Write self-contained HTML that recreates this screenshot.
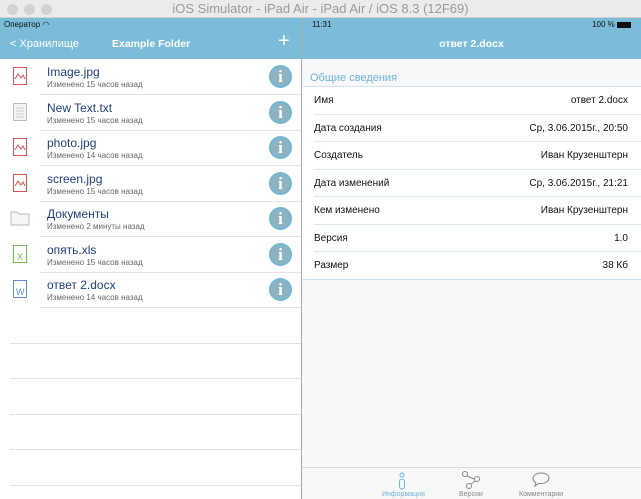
<!DOCTYPE html><html><head><meta charset="utf-8"><style>
*{margin:0;padding:0;box-sizing:border-box}
body{width:641px;height:499px;overflow:hidden;font-family:"Liberation Sans",sans-serif;background:#fff;position:relative}
.tb{position:absolute;left:0;top:0;width:641px;height:18px;background:#ebebeb;border-bottom:1px solid #d0d0d0;text-align:center;font-size:13px;color:#9a9a9a;line-height:18px}
.dot{position:absolute;top:4px;width:11px;height:11px;border-radius:50%;background:#d2d2d2}
.nav{position:absolute;top:18px;height:41px;background:#7bbdd8;color:#fff}
.l{position:absolute;left:0;top:59px;width:301px;height:440px;background:#fff}
.vd{position:absolute;left:301px;top:18px;width:1px;height:481px;background:#aaa}
.row{position:absolute;left:0;width:301px;height:36px}
.row .n{position:absolute;left:47px;top:6px;font-size:12px;color:#1f3f7a}
.row .s{position:absolute;left:47px;top:21px;font-size:8px;color:#666}
.row .ln{position:absolute;left:40px;right:0;bottom:0;height:1px;background:#e2e2e2}
.info{position:absolute;left:269px;top:6px;width:23px;height:23px;border-radius:50%;background:#8cb3c2;border:2px solid #74b6d3;color:#fff;font:bold 17px "Liberation Serif",serif;text-align:center;line-height:19px}
.ic{position:absolute;left:13px;top:8px;width:14px;height:18px}
.el{position:absolute;left:10px;width:291px;height:1px;background:#e2e2e2}
.r{position:absolute;left:302px;top:59px;width:339px;height:440px;background:#f7f8f9}
.rr{position:absolute;left:302px;width:339px;height:27.5px;background:#fff;font-size:10px;color:#111;line-height:27px}
.rr span{position:absolute;left:12px}.rr b{position:absolute;right:13px;font-weight:normal}
.rr i{position:absolute;left:12px;right:0;bottom:0;height:1px;background:#dde9f0}
.tab{position:absolute;left:302px;top:467px;width:339px;height:32px;background:#f7f7f7;border-top:1px solid #d8d8d8;font-size:7px;color:#888}
</style></head><body>
<div class="tb">iOS Simulator - iPad Air - iPad Air / iOS 8.3 (12F69)</div>
<div class="dot" style="left:7px"></div><div class="dot" style="left:24px"></div><div class="dot" style="left:41px"></div>
<div class="nav" style="left:0;width:301px">
<div style="position:absolute;left:4px;top:2px;font-size:8px;color:#111">Оператор ◠</div>
<div style="position:absolute;left:10px;top:20px;font-size:11px">&lt; Хранилище</div>
<div style="position:absolute;left:112px;top:20px;font-size:10.5px;font-weight:bold">Example Folder</div>
<div style="position:absolute;left:278px;top:12px;font-size:20px;font-weight:200">+</div>
</div>
<div class="nav" style="left:302px;width:339px">
<div style="position:absolute;left:10px;top:2px;font-size:8px;color:#111">11:31</div>
<div style="position:absolute;right:10px;top:2px;font-size:8px;color:#111">100 % <span style="display:inline-block;width:14px;height:6px;background:#111;vertical-align:middle"></span></div>
<div style="position:absolute;left:0;width:339px;top:20px;font-size:10.5px;font-weight:bold;text-align:center">ответ 2.docx</div>
</div>
<div class="l"></div>
<div class="row" style="top:59px"><svg class="ic" viewBox="0 0 14 18"><rect x=".5" y=".5" width="13" height="17" fill="#fff" stroke="#d9534f"/><path d="M2 12l3-5 3 4 2-3 2 4" stroke="#d9534f" fill="none"/></svg><div class="n">Image.jpg</div><div class="s">Изменено 15 часов назад</div><div class="info">i</div><div class="ln"></div></div>
<div class="row" style="top:95px"><svg class="ic" viewBox="0 0 14 18"><rect x=".5" y=".5" width="13" height="17" fill="#f4f4f4" stroke="#bbb"/><path d="M3 5h8M3 8h8M3 11h8M3 14h8" stroke="#ccc"/></svg><div class="n">New Text.txt</div><div class="s">Изменено 15 часов назад</div><div class="info">i</div><div class="ln"></div></div>
<div class="row" style="top:130px"><svg class="ic" viewBox="0 0 14 18"><rect x=".5" y=".5" width="13" height="17" fill="#fff" stroke="#d9534f"/><path d="M2 12l3-5 3 4 2-3 2 4" stroke="#d9534f" fill="none"/></svg><div class="n">photo.jpg</div><div class="s">Изменено 14 часов назад</div><div class="info">i</div><div class="ln"></div></div>
<div class="row" style="top:166px"><svg class="ic" viewBox="0 0 14 18"><rect x=".5" y=".5" width="13" height="17" fill="#fff" stroke="#d9534f"/><path d="M2 12l3-5 3 4 2-3 2 4" stroke="#d9534f" fill="none"/></svg><div class="n">screen.jpg</div><div class="s">Изменено 15 часов назад</div><div class="info">i</div><div class="ln"></div></div>
<div class="row" style="top:201px"><svg class="ic" style="left:10px;width:20px" viewBox="0 0 20 18"><path d="M1 3h6l2 2h10v11H1z" fill="#f6f6f6" stroke="#bbb"/></svg><div class="n">Документы</div><div class="s">Изменено 2 минуты назад</div><div class="info">i</div><div class="ln"></div></div>
<div class="row" style="top:237px"><svg class="ic" viewBox="0 0 14 18"><rect x=".5" y=".5" width="13" height="17" fill="#fff" stroke="#6cc24a"/><text x="4" y="15" font-size="9" fill="#6cc24a" font-family="Liberation Sans">X</text></svg><div class="n">опять.xls</div><div class="s">Изменено 15 часов назад</div><div class="info">i</div><div class="ln"></div></div>
<div class="row" style="top:272px"><svg class="ic" viewBox="0 0 14 18"><rect x=".5" y=".5" width="13" height="17" fill="#fff" stroke="#5b8fd9"/><text x="3" y="15" font-size="9" fill="#5b8fd9" font-family="Liberation Sans">W</text></svg><div class="n">ответ 2.docx</div><div class="s">Изменено 14 часов назад</div><div class="info">i</div><div class="ln"></div></div>
<div class="el" style="top:343px"></div><div class="el" style="top:378px"></div><div class="el" style="top:414px"></div><div class="el" style="top:449px"></div><div class="el" style="top:485px"></div>
<div class="r"></div>
<div style="position:absolute;left:310px;top:72px;font-size:11px;color:#6fb3d8">Общие сведения</div>
<div style="position:absolute;left:302px;top:86px;width:339px;height:1px;background:#d5e3ec"></div>
<div class="rr" style="top:87px"><span>Имя</span><b>ответ 2.docx</b><i></i></div>
<div class="rr" style="top:114.5px"><span>Дата создания</span><b>Ср, 3.06.2015г., 20:50</b><i></i></div>
<div class="rr" style="top:142px"><span>Создатель</span><b>Иван Крузенштерн</b><i></i></div>
<div class="rr" style="top:169.5px"><span>Дата изменений</span><b>Ср, 3.06.2015г., 21:21</b><i></i></div>
<div class="rr" style="top:197px"><span>Кем изменено</span><b>Иван Крузенштерн</b><i></i></div>
<div class="rr" style="top:224.5px"><span>Версия</span><b>1.0</b><i></i></div>
<div class="rr" style="top:252px"><span>Размер</span><b>38 Кб</b><i style="left:0;background:#d5e3ec"></i></div>
<div class="tab">
<svg style="position:absolute;left:96px;top:4px" width="8" height="18" viewBox="0 0 8 18"><circle cx="4" cy="3" r="2" fill="none" stroke="#6fb3d8"/><rect x="1.5" y="7" width="5" height="10" rx="2.5" fill="none" stroke="#6fb3d8"/></svg>
<div style="position:absolute;left:80px;top:23px;color:#6fb3d8">Информация</div>
<svg style="position:absolute;left:160px;top:3px" width="20" height="18" viewBox="0 0 20 18"><circle cx="3" cy="3" r="2.5" fill="none" stroke="#888"/><circle cx="15" cy="8" r="2.5" fill="none" stroke="#888"/><circle cx="7" cy="15" r="2.5" fill="none" stroke="#888"/><path d="M5 5l7 3M13 10l-4 3" stroke="#888"/></svg>
<div style="position:absolute;left:157px;top:23px">Версии</div>
<svg style="position:absolute;left:230px;top:4px" width="18" height="16" viewBox="0 0 18 16"><path d="M9 1C4.5 1 1 3.5 1 6.5c0 1.8 1.2 3.3 3 4.3L3 14l4-2.6c.6.1 1.3.1 2 .1 4.5 0 8-2.5 8-5.5S13.5 1 9 1z" fill="none" stroke="#888"/></svg>
<div style="position:absolute;left:217px;top:23px">Комментарии</div>
</div>
<div class="vd"></div>
</body></html>
